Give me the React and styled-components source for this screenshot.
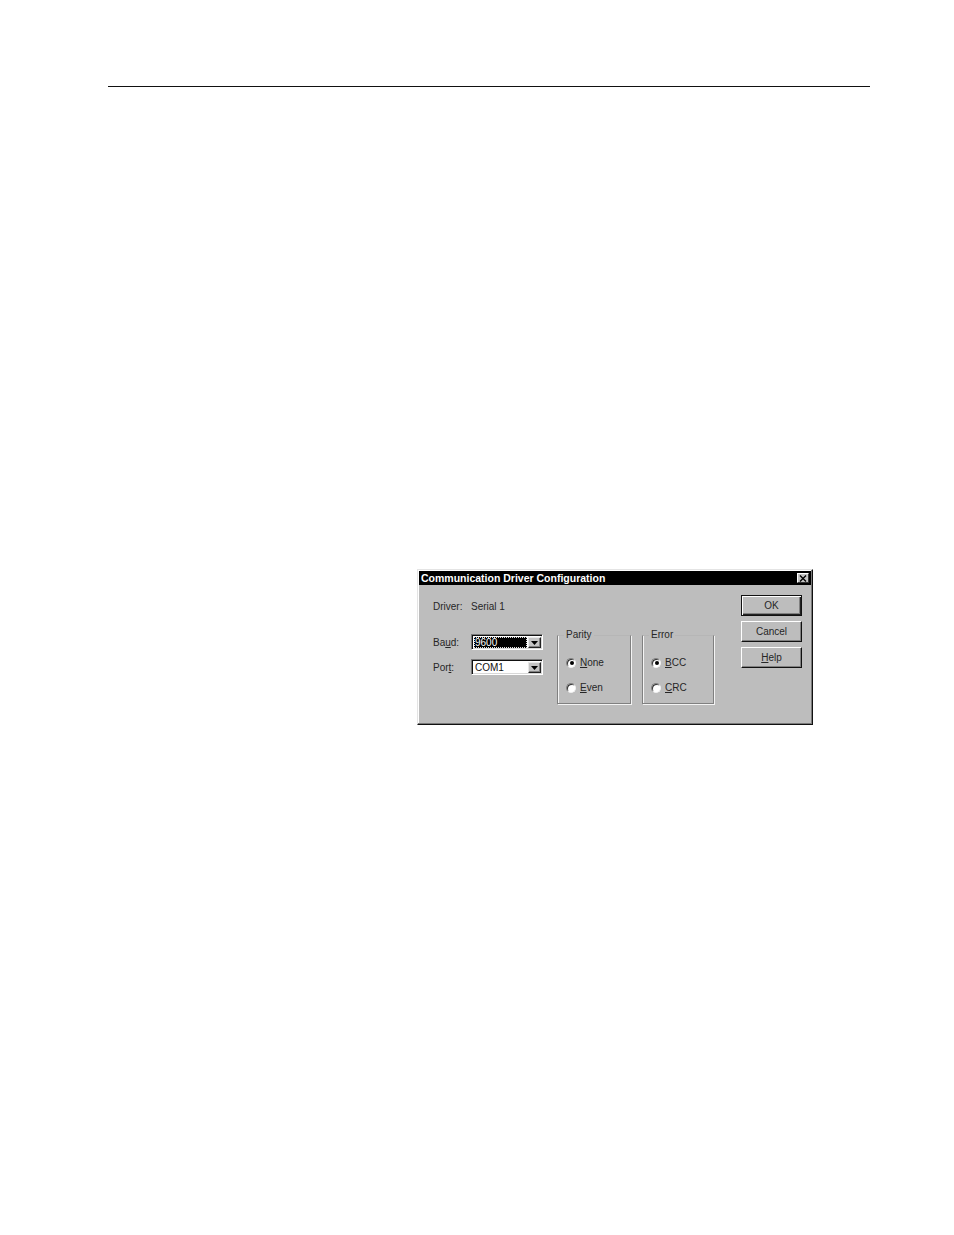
import React from "react";
import styled, { createGlobalStyle, css } from "styled-components";

const GlobalStyle = createGlobalStyle`
  html, body { margin: 0; padding: 0; background: #ffffff; }
  body { font-family: "Liberation Sans", Arial, sans-serif; }
`;

const Page = styled.div`
  width: 954px;
  height: 1235px;
  box-sizing: border-box;
  padding-top: 86px;
  overflow: hidden;
  background: #fff;
`;

const Rule = styled.div`
  margin-left: 108px;
  width: 762px;
  border-top: 1px solid #111;
`;

const Dialog = styled.div`
  margin-left: 417px;
  margin-top: 482px;
  width: 396px;
  height: 156px;
  box-sizing: border-box;
  background: #bdbdbd;
  border: 1px solid;
  border-color: #e4e4e4 #111 #111 #e4e4e4;
  box-shadow: inset -1px -1px 0 #7a7a7a, inset 1px 1px 0 #ffffff;
  padding: 1px;
  display: flex;
  flex-direction: column;
  font-size: 10px;
  color: #262626;
`;

const TitleBar = styled.div`
  height: 14px;
  background: #000;
  display: flex;
  align-items: center;
  justify-content: space-between;
  padding: 0 2px 0 2px;
`;

const TitleText = styled.span`
  color: #fff;
  font-weight: bold;
  font-size: 10.5px;
`;

const CloseBox = styled.div`
  width: 12px;
  height: 10px;
  box-sizing: border-box;
  background: #c4c4c4;
  border: 1px solid;
  border-color: #fff #333 #333 #fff;
  display: flex;
  align-items: center;
  justify-content: center;
`;

const Body = styled.div`
  flex: 1;
  display: flex;
  padding: 10px 9px 0 14px;
`;

const LeftArea = styled.div`
  display: flex;
  flex-direction: column;
`;

const DriverRow = styled.div`
  margin-top: 6px;
  display: flex;
  line-height: 12px;
`;

const Label = styled.span`
  width: 38px;
  flex: none;
`;

const ControlsRow = styled.div`
  margin-top: 16px;
  display: flex;
  align-items: flex-start;
`;

const Fields = styled.div`
  margin-top: 5px;
  display: flex;
  flex-direction: column;
  gap: 9px;
`;

const FieldRow = styled.div`
  display: flex;
  align-items: center;
  height: 16px;
`;

const Combo = styled.div`
  width: 72px;
  height: 16px;
  box-sizing: border-box;
  background: #fff;
  border: 1px solid;
  border-color: #7a7a7a #fff #fff #7a7a7a;
  box-shadow: inset 1px 1px 0 #111, inset -1px -1px 0 #d8d8d8;
  padding: 2px 1px 1px 2px;
  display: flex;
  align-items: stretch;
`;

const ComboText = styled.div`
  flex: 1;
  display: flex;
  align-items: center;
  padding-left: 1px;
  line-height: 10px;
  font-size: 10px;
  ${(p) =>
    p.$selected
      ? css`
          background: #000;
          color: #fff;
          outline: 1px dotted #e0e0e0;
          outline-offset: -1px;
          margin-right: 1px;
        `
      : css`
          color: #111;
        `}
`;

const DropButton = styled.div`
  width: 13px;
  flex: none;
  box-sizing: border-box;
  background: #c4c4c4;
  border: 1px solid;
  border-color: #e8e8e8 #222 #222 #e8e8e8;
  box-shadow: inset -1px -1px 0 #808080;
  display: flex;
  align-items: center;
  justify-content: center;
`;

const Group = styled.div`
  position: relative;
  width: ${(p) => p.$width}px;
  margin-left: ${(p) => p.$gap}px;
  padding-top: 6px;
`;

const GroupFrame = styled.div`
  height: 69px;
  box-sizing: border-box;
  border: 1px solid #808080;
  border-top-color: #b6b6b6;
  box-shadow: 1px 1px 0 #f4f4f4, inset 1px 0 0 #f4f4f4;
  padding: 20px 0 0 8px;
  display: flex;
  flex-direction: column;
  gap: 12px;
`;

const GroupTitle = styled.span`
  position: absolute;
  left: 7px;
  top: 0;
  padding: 0 2px;
  background: #bdbdbd;
  line-height: 12px;
`;

const RadioRow = styled.div`
  display: flex;
  align-items: center;
  height: 13px;
  gap: 4px;
`;

const RadioCircle = styled.span`
  width: 10px;
  height: 10px;
  box-sizing: border-box;
  border-radius: 50%;
  background: #fff;
  border: 1px solid;
  border-color: #808080 #f0f0f0 #f0f0f0 #808080;
  box-shadow: inset 1px 1px 0 #333;
  display: flex;
  align-items: center;
  justify-content: center;
`;

const RadioDot = styled.span`
  width: 4px;
  height: 4px;
  border-radius: 50%;
  background: #000;
  margin: 1px 0 0 1px;
`;

const Buttons = styled.div`
  margin-left: auto;
  display: flex;
  flex-direction: column;
  gap: 5px;
`;

const Button = styled.div`
  width: 61px;
  height: 21px;
  box-sizing: border-box;
  background: #bdbdbd;
  display: flex;
  align-items: center;
  justify-content: center;
  font-size: 10px;
  color: #262626;
  border: 1px solid;
  ${(p) =>
    p.$default
      ? css`
          border-color: #111;
          box-shadow: inset 1px 1px 0 #fff, inset -1px -1px 0 #222,
            inset -2px -2px 0 #808080;
        `
      : css`
          border-color: #fff #111 #111 #fff;
          box-shadow: inset -1px -1px 0 #808080;
        `}
`;

const U = styled.span`
  text-decoration: underline;
  text-underline-offset: 1px;
`;

const Triangle = () => (
  <svg width="7" height="4" viewBox="0 0 7 4">
    <path d="M0 0H7L3.5 4Z" fill="#000" />
  </svg>
);

const CloseX = () => (
  <svg width="8" height="7" viewBox="0 0 8 7">
    <path d="M1 0.5L7 6.5M7 0.5L1 6.5" stroke="#000" strokeWidth="1.4" />
  </svg>
);

const Radio = ({ checked, children }) => (
  <RadioRow>
    <RadioCircle>{checked && <RadioDot />}</RadioCircle>
    <span>{children}</span>
  </RadioRow>
);

export default function App() {
  return (
    <>
      <GlobalStyle />
      <Page>
        <Rule />
        <Dialog>
          <TitleBar>
            <TitleText>Communication Driver Configuration</TitleText>
            <CloseBox>
              <CloseX />
            </CloseBox>
          </TitleBar>
          <Body>
            <LeftArea>
              <DriverRow>
                <Label>Driver:</Label>
                <span>Serial 1</span>
              </DriverRow>
              <ControlsRow>
                <Fields>
                  <FieldRow>
                    <Label>
                      Ba<U>u</U>d:
                    </Label>
                    <Combo>
                      <ComboText $selected>9600</ComboText>
                      <DropButton>
                        <Triangle />
                      </DropButton>
                    </Combo>
                  </FieldRow>
                  <FieldRow>
                    <Label>
                      Por<U>t</U>:
                    </Label>
                    <Combo>
                      <ComboText>COM1</ComboText>
                      <DropButton>
                        <Triangle />
                      </DropButton>
                    </Combo>
                  </FieldRow>
                </Fields>
                <Group $width={74} $gap={14}>
                  <GroupFrame>
                    <Radio checked>
                      <U>N</U>one
                    </Radio>
                    <Radio>
                      <U>E</U>ven
                    </Radio>
                  </GroupFrame>
                  <GroupTitle>Parity</GroupTitle>
                </Group>
                <Group $width={72} $gap={11}>
                  <GroupFrame>
                    <Radio checked>
                      <U>B</U>CC
                    </Radio>
                    <Radio>
                      <U>C</U>RC
                    </Radio>
                  </GroupFrame>
                  <GroupTitle>Error</GroupTitle>
                </Group>
              </ControlsRow>
            </LeftArea>
            <Buttons>
              <Button $default>OK</Button>
              <Button>Cancel</Button>
              <Button>
                <U>H</U>elp
              </Button>
            </Buttons>
          </Body>
        </Dialog>
      </Page>
    </>
  );
}
